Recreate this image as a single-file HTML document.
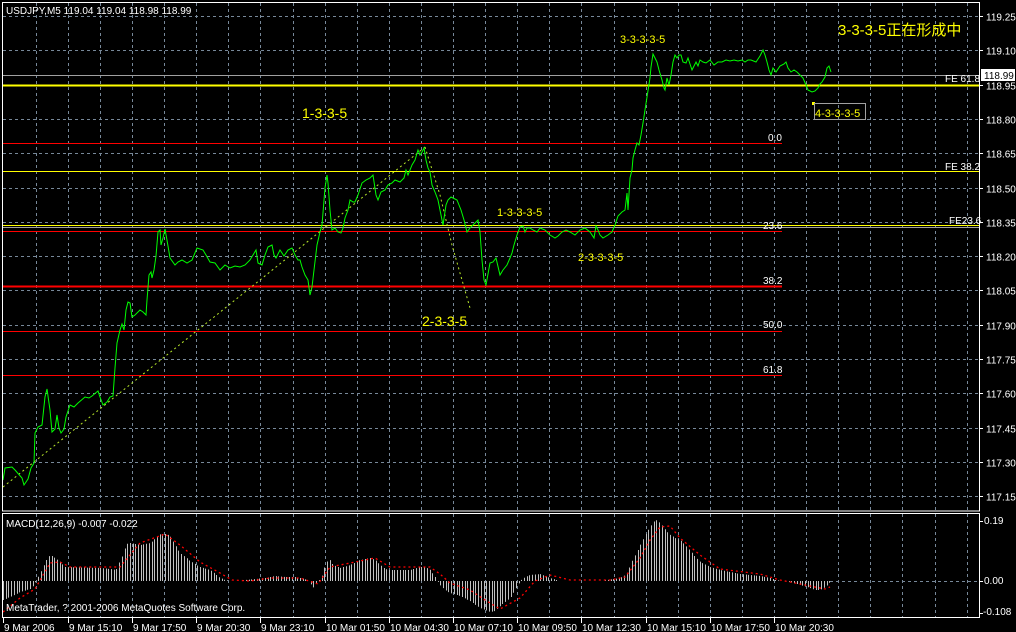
<!DOCTYPE html>
<html><head><meta charset="utf-8"><style>
html,body{margin:0;padding:0;background:#000;width:1016px;height:632px;overflow:hidden}
svg{display:block}
text{font-family:"Liberation Sans","Noto Sans CJK SC",sans-serif}
</style></head><body>
<svg id="s" width="1016" height="632" xmlns="http://www.w3.org/2000/svg">
<rect width="1016" height="632" fill="#000"/>
<g id="grid" stroke="#778899" stroke-width="1" stroke-dasharray="3,3"></g>
<g id="hist" stroke="#c0c0c0" stroke-width="1"></g>
<!-- fib red lines -->
<g stroke="#ff0000" stroke-width="1">
<line x1="3" y1="143.5" x2="782" y2="143.5"/>
<line x1="3" y1="231.5" x2="782" y2="231.5"/>
<line x1="3" y1="286.5" x2="782" y2="286.5" stroke-width="2"/>
<line x1="3" y1="331.5" x2="782" y2="331.5"/>
<line x1="3" y1="375.5" x2="782" y2="375.5"/>
</g>
<line x1="3" y1="75.5" x2="979" y2="75.5" stroke="#a0a0a0"/>
<line x1="3" y1="227.5" x2="979" y2="227.5" stroke="#a0a0a0"/>
<g stroke="#ffff00" stroke-width="1">
<line x1="3" y1="85.5" x2="979" y2="85.5" stroke-width="2"/>
<line x1="3" y1="171.5" x2="979" y2="171.5"/>
<line x1="3" y1="225.5" x2="979" y2="225.5"/>
</g>
<polyline points="3,487 425,147" fill="none" stroke="#b8e82a" stroke-dasharray="2,3"/>
<polyline points="425,147 440,195 452,245 462,280 470,308" fill="none" stroke="#b8e82a" stroke-dasharray="2,3"/>
<polyline id="price" fill="none" stroke="#00ff00" stroke-width="1"/>
<polyline id="sig" fill="none" stroke="#ff0000" stroke-width="1.3" stroke-dasharray="2,3"/>
<!-- borders -->
<g fill="none" stroke="#fff" stroke-width="1">
<rect x="2.5" y="2.5" width="977" height="508.5"/>
<rect x="2.5" y="513.5" width="977" height="104"/>
</g>
<g id="ticks" stroke="#fff"></g>
<g id="labels" fill="#fff" font-size="10"></g>
<text x="6" y="14" fill="#fff" font-size="10">USDJPY,M5  119.04 119.04 118.98 118.99</text>
<text x="6" y="527" fill="#fff" font-size="10">MACD(12,26,9) -0.007 -0.022</text>
<text x="6" y="611" fill="#fff" font-size="10">MetaTrader, ? 2001-2006 MetaQuotes Software Corp.</text>
<g fill="#ffff00">
<text x="302" y="118" font-size="14">1-3-3-5</text>
<text x="422" y="326" font-size="14">2-3-3-5</text>
<text x="497" y="216" font-size="11">1-3-3-3-5</text>
<text x="578" y="261" font-size="11">2-3-3-3-5</text>
<text x="620" y="43" font-size="11">3-3-3-3-5</text>
<text x="838" y="35" font-size="15">3-3-3-5正在形成中</text>
<text x="815" y="117" font-size="11">4-3-3-3-5</text>
<rect x="812" y="102" width="3" height="3"/>
</g>
<rect x="814.5" y="103.5" width="51" height="16" fill="none" stroke="#a0a0a0"/>
<g fill="#fff" font-size="10">
<text x="768" y="141">0.0</text>
<text x="763" y="229">23.6</text>
<text x="763" y="284">38.2</text>
<text x="763" y="328">50.0</text>
<text x="763" y="373">61.8</text>
<text x="945" y="82">FE 61.8</text>
<text x="945" y="170">FE 38.2</text>
<text x="949" y="224">FE23.6</text>
<text x="984" y="524">0.19</text>
<text x="984" y="584">0.00</text>
<text x="983" y="615">-0.108</text>
</g>
<rect x="981" y="69" width="34" height="12" fill="#fff"/>
<text x="984" y="79" fill="#000" font-size="10">118.99</text>
</svg>
<script>
var NS="http://www.w3.org/2000/svg";
function el(p,n,a){var e=document.createElementNS(NS,n);for(var k in a)e.setAttribute(k,a[k]);p.appendChild(e);return e;}
var g=document.getElementById('grid');
for(var k=0;k<30;k++){var x=Math.round(35.7+32.1*k)+0.5;if(x>979)break;
el(g,'line',{x1:x,y1:3,x2:x,y2:511});el(g,'line',{x1:x,y1:514,x2:x,y2:617});}
var prices=["119.25","119.10","118.95","118.80","118.65","118.50","118.35","118.20","118.05","117.90","117.75","117.60","117.45","117.30","117.15"];
var L=document.getElementById('labels'),T=document.getElementById('ticks');
for(var i=0;i<15;i++){var y=Math.round(16+34.3*i)+0.5;el(g,'line',{x1:3,y1:y,x2:979,y2:y});
el(T,'line',{x1:980,y1:y,x2:983,y2:y});var t=el(L,'text',{x:986,y:y+4});t.textContent=prices[i];}
el(g,'line',{x1:830,y1:581.5,x2:979,y2:581.5});
[521,581,613].forEach(function(y){el(T,'line',{x1:980,y1:y+.5,x2:983,y2:y+.5});});
var times=["9 Mar 2006","9 Mar 15:10","9 Mar 17:50","9 Mar 20:30","9 Mar 23:10","10 Mar 01:50","10 Mar 04:30","10 Mar 07:10","10 Mar 09:50","10 Mar 12:30","10 Mar 15:10","10 Mar 17:50","10 Mar 20:30"];
for(var i=0;i<times.length;i++){var x=i==0?3:Math.round(35.7+32.1*(2*i-1));
el(T,'line',{x1:x+.5,y1:618,x2:x+.5,y2:623});var t=el(L,'text',{x:x+1,y:631});t.textContent=times[i];}
var P="3,480 5,468 12,467 15,470 22,478 24,485 28,479 31,468 34,463 35,433 38,427 42,425 45,397 47,389 50,410 52,432 55,429 57,415 59,428 61,433 64,429 66,417 70,405 74,407 78,403 85,397 89,398 92,396 98,391 100,397 103,405 107,402 110,397 113,396 115,368 117,343 120,330 122,324 124,330 126,310 128,302 130,303 132,317 135,315 140,310 143,312 146,315 147,300 149,275 151,272 152,278 154,270 156,256 158,232 160,230 161,245 163,238 165,229 168,246 170,258 175,265 178,262 182,260 187,263 192,260 197,248 203,250 206,255 210,262 215,263 220,270 225,265 230,268 235,266 240,267 245,265 250,260 253,255 256,250 258,263 262,265 265,255 268,247 272,245 274,255 276,258 280,250 284,256 288,250 292,248 295,255 298,260 300,260 302,267 305,275 308,280 310,295 312,287 314,270 317,245 320,232 322,225 325,188 327,175 328,183 330,210 332,230 335,228 338,232 341,233 343,228 345,218 348,210 350,200 353,202 355,202 358,195 362,183 366,180 370,178 373,175 376,195 378,200 381,192 385,190 388,185 392,183 395,180 400,182 404,178 406,170 408,175 412,165 415,160 418,150 420,155 422,152 424,148 426,160 428,168 430,172 432,185 435,192 438,200 441,215 443,225 446,205 448,200 451,197 453,198 457,200 459,205 461,210 464,220 467,232 470,228 473,225 476,222 478,220 480,232 482,260 484,280 486,285 490,263 493,262 496,258 500,275 503,270 507,265 510,258 512,253 514,245 517,235 520,227 523,226 525,232 527,228 530,228 533,230 537,232 540,228 545,230 550,235 555,238 558,236 562,232 566,230 570,232 575,235 580,230 585,228 590,232 594,238 596,226 598,230 600,235 603,238 608,235 612,232 615,225 618,216 622,212 625,210 627,193 628,210 630,178 632,170 633,158 635,150 637,143 639,145 641,135 643,123 645,110 647,97 650,78 651,67 653,54 655,58 657,62 659,70 662,80 664,88 665,90 667,78 669,85 671,75 673,62 675,55 677,58 679,55 681,55 683,62 686,63 688,58 690,64 692,70 694,66 696,62 698,66 700,60 703,62 706,63 710,60 714,65 718,62 722,62 726,60 730,61 734,60 738,61 742,60 745,62 748,60 751,60 756,62 760,56 763,50 765,55 767,62 769,70 771,75 773,68 776,72 780,66 784,64 786,62 788,68 791,72 794,70 797,72 800,75 803,78 806,85 808,90 812,92 815,91 818,88 820,84 822,82 825,77 827,68 829,66 831,72";
document.getElementById('price').setAttribute('points',P);
var H=[[3,600],[10,597],[20,592],[30,589],[34,585],[36,581],[40,573],[45,562],[48,557],[50,555],[55,558],[60,562],[65,567],[100,568],[110,569],[116,570],[118,565],[122,556],[126,544],[130,543],[140,545],[150,543],[160,534],[166,534],[170,536],[175,545],[180,553],[190,561],[200,567],[210,570],[215,574],[220,578],[225,580],[235,581],[245,580],[255,579],[265,578],[275,576],[285,577],[295,577],[305,579],[310,583],[313,588],[317,583],[322,575],[326,562],[330,560],[333,565],[340,568],[350,565],[360,560],[370,558],[375,560],[380,565],[385,569],[390,570],[410,570],[420,567],[425,567],[430,570],[435,577],[437,581],[440,585],[445,590],[450,593],[460,596],[470,601],[480,608],[490,612],[495,611],[500,606],[505,602],[510,598],[515,590],[520,581],[525,577],[530,575],[540,574],[550,578],[560,581],[600,581],[620,578],[625,575],[628,571],[632,561],[636,553],[640,545],[645,535],[650,527],[653,522],[656,520],[660,523],[665,530],[670,535],[675,538],[680,540],[685,545],[690,551],[695,557],[700,562],[710,567],[720,570],[740,574],[760,576],[770,578],[775,580],[790,582],[800,585],[810,588],[815,590],[820,590],[825,587],[830,582]];
function interp(A,x){for(var i=1;i<A.length;i++){if(x<=A[i][0]){var a=A[i-1],b=A[i];return a[1]+(b[1]-a[1])*(x-a[0])/(b[0]-a[0]);}}return A[A.length-1][1];}
var hg=document.getElementById('hist');
for(var x=3;x<=830;x+=2.7){var xx=Math.round(x)+.5,y=interp(H,x);if(Math.abs(y-581)<0.6)continue;el(hg,'line',{x1:xx,y1:581,x2:xx,y2:y});}
var S=[[3,612],[20,598],[35,589],[50,563],[60,562],[70,567],[120,567],[140,543],[165,534],[180,545],[200,562],[220,573],[232,580],[250,581],[270,578],[300,578],[318,584],[330,567],[350,563],[375,558],[390,567],[430,567],[440,574],[450,583],[470,590],[485,600],[500,609],[520,598],[535,581],[550,575],[570,580],[610,580],[625,577],[640,558],[650,540],[660,527],[670,526],[680,538],[700,555],[720,569],[760,574],[780,580],[810,586],[825,589],[830,587]];
document.getElementById('sig').setAttribute('points',S.map(function(p){return p.join(',')}).join(' '));
</script>
</body></html>
